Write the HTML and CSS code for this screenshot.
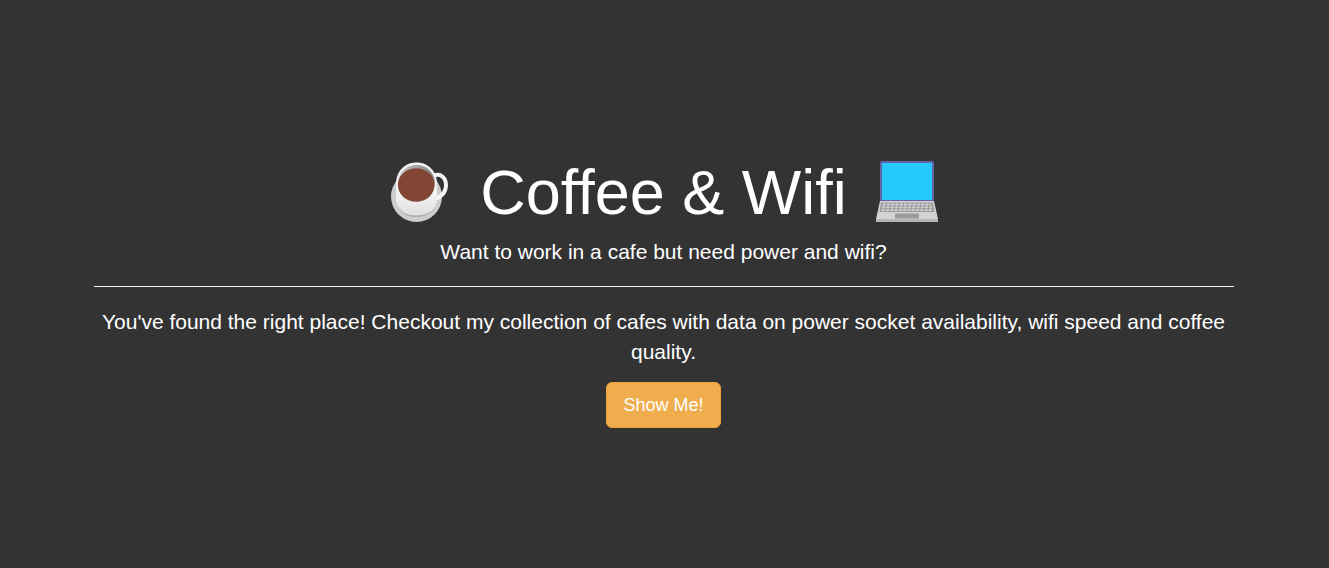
FILE: index.html
```html
<!DOCTYPE html>
<html lang="en">
<head>
<meta charset="utf-8">
<meta name="viewport" content="width=device-width, initial-scale=1">
<title>Coffee &amp; Wifi</title>
<link rel="stylesheet" href="styles.css">
</head>
<body>
<main class="hero">
  <div class="container">
    <h1 class="title">
      <svg class="icon" viewBox="0 0 64 64" aria-hidden="true">
        <defs>
          <linearGradient id="cup" x1="0" y1="0" x2="0" y2="1">
            <stop offset="0.6" stop-color="#f2f2f2"/>
            <stop offset="1" stop-color="#e0e0e0"/>
          </linearGradient>
          <linearGradient id="inside" x1="0" y1="0" x2="1" y2="0">
            <stop offset="0" stop-color="#c4c4c4"/>
            <stop offset="1" stop-color="#858585"/>
          </linearGradient>
        </defs>
        <circle cx="28.500" cy="36.500" r="25.500" fill="#cdcdcd"/>
        <path d="M9 40c0 11 8 17 19.500 17S48 51 48 40z" fill="#ababab"/>
        <path d="M46 15.500C53 13 58 18 58 25C58 33 52 38 46 39" fill="none" stroke="#f5f5f5" stroke-width="4"/>
        <path d="M8 24C8 11 17 2.500 28.500 2.500S49 11 49 24v14c0 12-9 17.500-20.500 17.500S8 50 8 38z" fill="url(#cup)"/>
        <ellipse cx="28.500" cy="22.500" rx="18.300" ry="17.500" fill="url(#inside)"/>
        <ellipse cx="28.200" cy="25" rx="18.300" ry="16.800" fill="#824734"/>
      </svg>
      <span>Coffee &amp; Wifi</span>
      <svg class="icon" viewBox="0 0 64 64" aria-hidden="true">
        <rect x="5" y="1" width="54" height="41" rx="2" fill="#6264a7"/>
        <rect x="7" y="3" width="50" height="37" fill="#26c9fc"/>
        <path d="M5 41h54l4 18v3H1v-3z" fill="#d3d3d3"/>
        <path d="M1 59h62v2q0 1-2 1H3q-2 0-2-1z" fill="#b4b4b4"/>
        <path d="M6 42.500h52l1.500 9.500h-55z" fill="#9b9b9b"/>
        <path d="M7.500 44.500h49M7 47.300h50M6.500 50.200h51.500" stroke="#d3d3d3" stroke-width="1.800" stroke-dasharray="3.200 1.100"/>
        <rect x="20" y="53.500" width="24" height="5" rx="1" fill="#9b9b9b"/>
      </svg>
    </h1>
    <p class="lead">Want to work in a cafe but need power and wifi?</p>
    <hr class="divider">
    <p class="lead">You've found the right place! Checkout my collection of cafes with data on power socket availability, wifi speed and coffee quality.</p>
    <a class="button" href="#cafes">Show Me!</a>
  </div>
</main>
</body>
</html>
```
FILE: styles.css
```css
* {
  box-sizing: border-box;
}

body {
  margin: 0;
  background: #333;
  color: #fff;
  font-family: "Liberation Sans", Arial, sans-serif;
}

.hero {
  display: flex;
  align-items: center;
  justify-content: center;
  min-height: 100vh;
  padding: 0 2px 3px 0;
}

.container {
  width: 100%;
  max-width: 1170px;
  padding: 0 15px;
  text-align: center;
}

.title {
  display: flex;
  align-items: center;
  justify-content: center;
  gap: 28px;
  margin: 20px 0 10px;
  font-size: 63px;
  font-weight: 500;
  line-height: 69px;
}

.icon {
  flex: none;
  width: 64px;
  height: 64px;
}

.lead {
  margin: 0 0 15px;
  font-size: 21px;
  line-height: 30px;
}

.divider {
  margin: 19px 0 20px;
  border: 0;
  border-top: 1px solid #eee;
}

.button {
  display: inline-block;
  padding: 10px 16px;
  border: 1px solid #eea236;
  border-radius: 6px;
  background: #f0ad4e;
  color: #fff;
  font-size: 18px;
  line-height: 24px;
  text-decoration: none;
}
```
